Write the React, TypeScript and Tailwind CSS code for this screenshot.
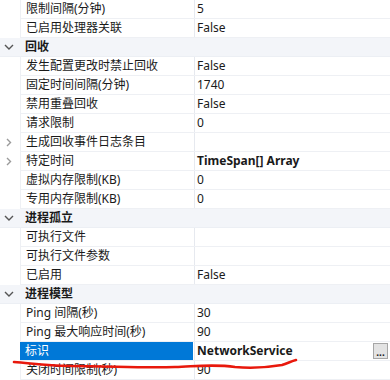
import React from "react";

type Row =
  | { kind: "cat"; label: string }
  | { kind: "prop"; label: string; value?: string; bold?: boolean; expand?: boolean; selected?: boolean };

const rows: Row[] = [
  { kind: "prop", label: "限制间隔(分钟)", value: "5" },
  { kind: "prop", label: "已启用处理器关联", value: "False" },
  { kind: "cat", label: "回收" },
  { kind: "prop", label: "发生配置更改时禁止回收", value: "False" },
  { kind: "prop", label: "固定时间间隔(分钟)", value: "1740" },
  { kind: "prop", label: "禁用重叠回收", value: "False" },
  { kind: "prop", label: "请求限制", value: "0" },
  { kind: "prop", label: "生成回收事件日志条目", expand: true },
  { kind: "prop", label: "特定时间", value: "TimeSpan[] Array", bold: true, expand: true },
  { kind: "prop", label: "虚拟内存限制(KB)", value: "0" },
  { kind: "prop", label: "专用内存限制(KB)", value: "0" },
  { kind: "cat", label: "进程孤立" },
  { kind: "prop", label: "可执行文件" },
  { kind: "prop", label: "可执行文件参数" },
  { kind: "prop", label: "已启用", value: "False" },
  { kind: "cat", label: "进程模型" },
  { kind: "prop", label: "Ping 间隔(秒)", value: "30" },
  { kind: "prop", label: "Ping 最大响应时间(秒)", value: "90" },
  { kind: "prop", label: "标识", value: "NetworkService", bold: true, selected: true },
  { kind: "prop", label: "关闭时间限制(秒)", value: "90" },
];

function ChevronDown() {
  return (
    <svg width="10" height="6" viewBox="0 0 10 6" className="ml-[4px]">
      <path d="M1 1l4 4 4-4" fill="none" stroke="#555" strokeWidth="1.4" />
    </svg>
  );
}

function ChevronRight() {
  return (
    <svg width="6" height="9" viewBox="0 0 6 9" className="ml-[6px]">
      <path d="M1 1l3.5 3.5L1 8" fill="none" stroke="#9a9a9a" strokeWidth="1.4" />
    </svg>
  );
}

export default function App() {
  return (
    <div className="relative w-[390px] h-[380px] overflow-hidden bg-white text-[12px] leading-[18px] text-[#1a1a1a] font-['Noto_Sans','Noto_Sans_CJK_SC',sans-serif]">
      {rows.map((row, i) =>
        row.kind === "cat" ? (
          <div key={i} className="flex items-center h-[19px] bg-[#f3f5f9] border-b border-[#eceff4]">
            <div className="w-[20px] flex items-center">
              <ChevronDown />
            </div>
            <span className="pl-[5px] font-bold">{row.label}</span>
          </div>
        ) : (
          <div key={i} className="flex h-[19px]">
            <div className="w-[20px] flex items-center shrink-0">{row.expand && <ChevronRight />}</div>
            <div className="flex flex-1 border-b border-[#eef0f4]">
              <div
                className={
                  row.selected
                    ? "w-[173px] pl-[5px] bg-[#0078d7] text-white"
                    : "w-[173px] pl-[5px] border-l border-[#eef0f4]"
                }
              >
                {row.label}
              </div>
              <div className="w-[2px] border-r border-[#e6e9ef]" />
              <div className={"flex-1 flex items-center pl-[2px] pr-[2px] " + (row.bold ? "font-bold" : "")}>
                <span className="flex-1">{row.value}</span>
                {row.selected && (
                  <div className="w-[15px] h-[16px] bg-[#e3e3e3] border border-[#a6a6a6] flex items-end justify-center text-[10px] leading-[10px] font-bold pb-[1px]">
                    ...
                  </div>
                )}
              </div>
            </div>
          </div>
        )
      )}
      <svg className="absolute left-0 top-0 pointer-events-none" width="390" height="380">
        <path
          d="M14 362 C30 363 45 366 70 366 C110 366 140 368 175 367 C200 366 215 364 235 367 C255 369 270 367 282 365 C288 363 292 361 296 360"
          fill="none"
          stroke="#e8180c"
          strokeWidth="2.6"
          strokeLinecap="round"
        />
      </svg>
    </div>
  );
}
